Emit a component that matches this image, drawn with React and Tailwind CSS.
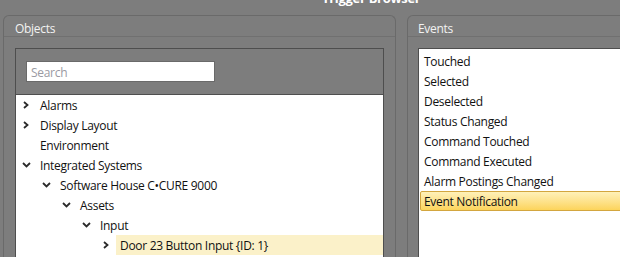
import React from 'react'

const treeRows = [
  { label: "Alarms", level: 0, state: "closed" },
  { label: "Display Layout", level: 0, state: "closed" },
  { label: "Environment", level: 0, state: "leaf" },
  { label: "Integrated Systems", level: 0, state: "open" },
  { label: "Software House C•CURE 9000", level: 1, state: "open" },
  { label: "Assets", level: 2, state: "open" },
  { label: "Input", level: 3, state: "open" },
  { label: "Door 23 Button Input {ID: 1}", level: 4, state: "closed", selected: true },
];

const events = [
  "Touched",
  "Selected",
  "Deselected",
  "Status Changed",
  "Command Touched",
  "Command Executed",
  "Alarm Postings Changed",
  "Event Notification",
];

const indents = ["w-0", "w-[20px]", "w-[40px]", "w-[60px]", "w-[80px]"];

function Chevron({ state }) {
  if (state === "leaf") return <span className="w-[16px] shrink-0" />;
  return (
    <span className="flex w-[16px] shrink-0 items-center justify-center">
      {state === "closed" ? (
        <svg width="6" height="8" viewBox="0 0 6 8">
          <path d="M1 1 L4.5 4 L1 7" fill="none" stroke="#2b2b2b" strokeWidth="1.8" />
        </svg>
      ) : (
        <svg width="9" height="6" viewBox="0 0 9 6">
          <path d="M1 1 L4.5 4.5 L8 1" fill="none" stroke="#2b2b2b" strokeWidth="1.8" />
        </svg>
      )}
    </span>
  );
}

function TreeRow({ row }) {
  return (
    <div className="flex h-[20px] items-center pl-[2px]">
      <span className={"shrink-0 " + indents[row.level]} />
      <Chevron state={row.state} />
      <span
        className={
          row.selected
            ? "ml-[2px] flex h-[20px] flex-1 items-center bg-[#fbf1c9] pl-[4px] pt-[2px]"
            : "pl-[6px] pt-[2px]"
        }
      >
        {row.label}
      </span>
    </div>
  );
}

export default function App() {
  return (
    <div
      className="h-[257px] w-[620px] overflow-hidden bg-[#7d7d7d] text-[12px] tracking-[-0.3px] text-[#111]"
      style={{ fontFamily: '"Open Sans", "Noto Sans", sans-serif' }}
    >
      <div className="h-[15px] overflow-hidden">
        <div className="-mt-[10px] pl-[322px] text-[13px] font-bold leading-[16px] text-white">
          Trigger Browser
        </div>
      </div>

      <div className="flex gap-[11px] pl-[3px]">
        <section className="flex h-[260px] w-[393px] shrink-0 flex-col rounded-t-[6px] border border-b-0 border-[#6a6a6a]">
          <header className="h-[21px] border-b border-[#707070] pl-[11px] pt-[2px] leading-[21px] text-[#f2f2f2]">
            Objects
          </header>
          <div className="px-[11px] pt-[11px]">
            <div className="border border-[#4e4e4e] bg-[#7d7d7d]">
              <div className="px-[10px] pb-[12px] pt-[12px]">
                <div className="h-[21px] w-[189px] border border-[#6a6a6a] bg-white pl-[4px] pt-[1px] leading-[19px] text-[#9a9aa2]">
                  Search
                </div>
              </div>
              <div className="h-[200px] border-t border-[#4e4e4e] bg-white">
                {treeRows.map((row) => (
                  <TreeRow key={row.label} row={row} />
                ))}
              </div>
            </div>
          </div>
        </section>

        <section className="flex h-[260px] w-[260px] shrink-0 flex-col rounded-t-[6px] border border-b-0 border-[#6a6a6a]">
          <header className="h-[21px] border-b border-[#707070] pl-[10px] pt-[2px] leading-[21px] text-[#f2f2f2]">
            Events
          </header>
          <div className="pl-[10px] pt-[11px]">
            <div className="h-[220px] border-l border-t border-[#4e4e4e] bg-white pt-[2px]">
              {events.map((name, i) =>
                i === events.length - 1 ? (
                  <div
                    key={name}
                    className="ml-[1px] flex h-[20px] items-center rounded-[2px] border border-[#d3a63f] bg-gradient-to-b from-[#fff1b8] to-[#fcd45a] pl-[3px] pt-[2px]"
                  >
                    {name}
                  </div>
                ) : (
                  <div key={name} className="flex h-[20px] items-center pl-[5px] pt-[2px]">
                    {name}
                  </div>
                )
              )}
            </div>
          </div>
        </section>
      </div>
    </div>
  );
}
